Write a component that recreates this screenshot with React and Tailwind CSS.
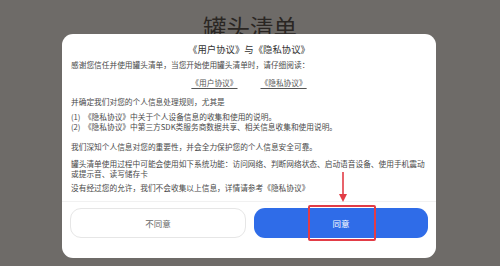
import React from 'react';

const cjk = { fontFamily: '"Noto Sans CJK SC", "Noto Sans", sans-serif' };

export default function App() {
    return (
        <div className="relative w-[500px] h-[266px] overflow-hidden bg-[#6e6b68]" style={cjk}>
            {/* page behind the overlay */}
            <div className="pt-[20px] text-center text-[23.5px] leading-[14px] text-[#2a2623]">罐头清单</div>

            {/* dialog */}
            <div className="absolute left-[62px] top-[34px] w-[374px] h-[224px] rounded-[11px] bg-white">
                <div className="pt-[8px] text-center text-[9.4px] leading-[14px] text-[#333]">《用户协议》与《隐私协议》</div>

                <div className="px-[9px] text-[7.7px] leading-[10px] text-[#4a4a4a] whitespace-nowrap">
                    <p className="mt-[4px]">感谢您信任并使用罐头清单，当您开始使用罐头清单时，请仔细阅读：</p>
                    <div className="mt-[8px] flex justify-center gap-[23px] text-[#555]">
                        <span className="underline underline-offset-[2px]">《用户协议》</span>
                        <span className="underline underline-offset-[2px]">《隐私协议》</span>
                    </div>
                    <p className="mt-[9px]">并确定我们对您的个人信息处理规则，尤其是</p>
                    <p className="mt-[5px]">(1)&nbsp;&nbsp;《隐私协议》中关于个人设备信息的收集和使用的说明。</p>
                    <p>(2)&nbsp;&nbsp;《隐私协议》中第三方SDK类服务商数据共享、相关信息收集和使用说明。</p>
                    <p className="mt-[10px]">我们深知个人信息对您的重要性，并会全力保护您的个人信息安全可靠。</p>
                    <p className="mt-[7px]">
                        罐头清单使用过程中可能会使用如下系统功能：访问网络、判断网络状态、启动语音设备、使用手机震动
                        <br />
                        或提示音、读写储存卡
                    </p>
                    <p className="mt-[4px]">没有经过您的允许，我们不会收集以上信息，详情请参考《隐私协议》</p>
                </div>

                <div className="mt-[8px] h-px bg-[#f1f1f1]" />

                <div className="mt-[6px] px-[8px] flex gap-[8px]">
                    <button className="flex-1 h-[30px] rounded-[11px] border border-[#e6e6e6] bg-white text-[8.5px] text-[#666]">不同意</button>
                    <button className="flex-1 h-[30px] rounded-[11px] bg-[#2f6ce8] text-[8.5px] text-white">同意</button>
                </div>
            </div>

            {/* annotation: arrow + highlight box */}
            <svg className="absolute left-[337px] top-[172px]" width="12" height="31" viewBox="0 0 12 31">
                <line x1="6" y1="0" x2="6" y2="24" stroke="#e23c46" strokeWidth="1.6" />
                <path d="M2 22 L6 30 L10 22 Z" fill="#e23c46" />
            </svg>
            <div className="absolute left-[308px] top-[205px] w-[68px] h-[36px] rounded-[2px] border-2 border-[#e23c46]" />
        </div>
    );
}
